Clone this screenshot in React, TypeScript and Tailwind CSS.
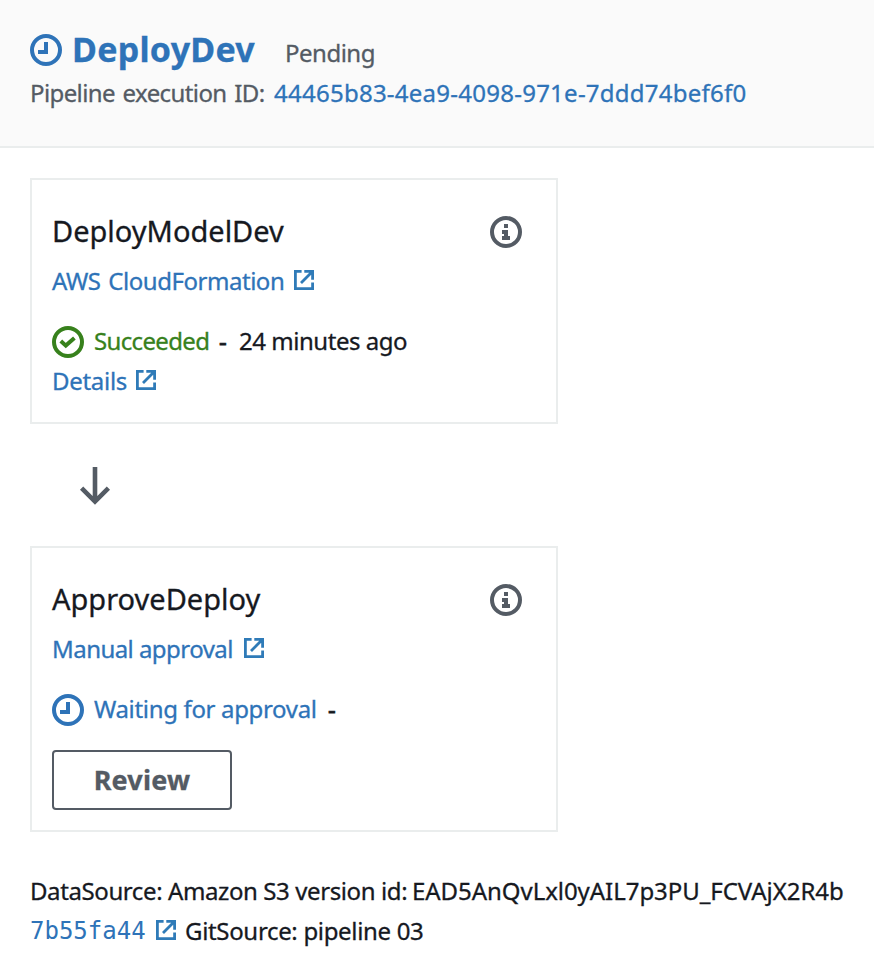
import type { ReactNode } from "react";

function ClockIcon() {
  return (
    <svg className="h-8 w-8 shrink-0" viewBox="0 0 16 16" fill="none" stroke="currentColor" strokeWidth="2">
      <circle cx="8" cy="8" r="7" />
      <path d="M8 4v5H4" />
    </svg>
  );
}

function CheckIcon() {
  return (
    <svg className="h-8 w-8 shrink-0" viewBox="0 0 16 16" fill="none" stroke="currentColor" strokeWidth="2">
      <circle cx="8" cy="8" r="7" />
      <path d="M4.4 7.5 6.9 9.8 11.2 6" />
    </svg>
  );
}

function InfoIcon() {
  return (
    <svg className="h-8 w-8 shrink-0 text-[#545b64]" viewBox="0 0 16 16" fill="currentColor">
      <circle cx="8" cy="8" r="7" fill="none" stroke="currentColor" strokeWidth="2" />
      <path d="M7 4h2v2H7zM6 7h3v3h1v2H6v-2h1V9H6z" />
    </svg>
  );
}

function ExternalIcon() {
  return (
    <svg className="h-5 w-5 shrink-0" viewBox="0 0 20 20" fill="none" stroke="#2f7bb8" strokeWidth="2.8">
      <path d="M7.6 1.4H1.4v17.2h17.2V12.6" />
      <path d="M10.3 1.4h8.3V9.7M18.2 1.8 7 13" />
    </svg>
  );
}

function ArrowDown() {
  return (
    <svg className="h-10 w-8" viewBox="0 0 32 40" fill="none" stroke="#545b64" strokeWidth="4.6">
      <path d="M16 0v35M2.6 21.2 16 34.6l13.4-13.4" />
    </svg>
  );
}

function Card({
  title,
  titleClass,
  className,
  children,
}: {
  title: string;
  titleClass: string;
  className: string;
  children: ReactNode;
}) {
  return (
    <section className={`w-[528px] border-2 border-[#eaeded] bg-white px-5 pt-[31px] ${className}`}>
      <div className="flex h-10 items-start justify-between pr-[14px]">
        <h2 className={`text-[29px] leading-10 ${titleClass}`}>{title}</h2>
        <div className="pt-[5px]">
          <InfoIcon />
        </div>
      </div>
      {children}
    </section>
  );
}

export default function App() {
  return (
    <div className="min-h-[980px] w-[874px] bg-white font-['Noto_Sans','Open_Sans',sans-serif] text-[24px] leading-10 whitespace-nowrap text-[#16191f] [-webkit-text-stroke:0.3px]">
      <header className="h-[148px] border-b-2 border-[#eaeded] bg-[#fafafa] pt-6 pl-[30px]">
        <div className="flex h-[49px] items-start text-[#2e73b8]">
          <div className="w-[42px] pt-[10px]">
            <ClockIcon />
          </div>
          <h1 className="w-[213px] text-[34px] leading-[50px] font-bold tracking-[0.25px] [-webkit-text-stroke:0.3px]">DeployDev</h1>
          <span className="pt-[9px] tracking-[-0.5px] text-[#545b64]">Pending</span>
        </div>
        <div className="flex">
          <span className="w-[244px] tracking-[-0.6px] text-[#545b64] [word-spacing:2px]">Pipeline execution ID:</span>
          <a className="tracking-[0.25px] text-[#2e73b8]">44465b83-4ea9-4098-971e-7ddd74bef6f0</a>
        </div>
      </header>

      <main className="px-[30px] pt-[30px]">
        <Card title="DeployModelDev" titleClass="tracking-[0px]" className="pb-[21px]">
          <div className="mt-[10px] flex text-[#2e73b8]">
            <a className="w-[242px] tracking-[-0.46px] [word-spacing:2px]">AWS CloudFormation</a>
            <div className="pt-[9px]">
              <ExternalIcon />
            </div>
          </div>
          <div className="mt-5 flex">
            <div className="w-[42px] pt-[5px] text-[#37811c]">
              <CheckIcon />
            </div>
            <span className="w-[125px] tracking-[-0.65px] text-[#37811c]">Succeeded</span>
            <span className="w-[20px] [-webkit-text-stroke:0.8px]">-</span>
            <span className="tracking-[-0.47px]">24 minutes ago</span>
          </div>
          <div className="flex text-[#2e73b8]">
            <a className="w-[84px] tracking-[-0.3px]">Details</a>
            <div className="pt-[9px]">
              <ExternalIcon />
            </div>
          </div>
        </Card>

        <div className="h-[122px] pt-[43px] pl-[49px]">
          <ArrowDown />
        </div>

        <Card title="ApproveDeploy" titleClass="" className="pb-5">
          <div className="mt-[10px] flex text-[#2e73b8]">
            <a className="w-[192px] tracking-[-0.55px]">Manual approval</a>
            <div className="pt-[9px]">
              <ExternalIcon />
            </div>
          </div>
          <div className="mt-5 flex">
            <div className="w-[42px] pt-[5px] text-[#2e73b8]">
              <ClockIcon />
            </div>
            <span className="w-[234px] tracking-[-0.34px] text-[#2e73b8]">Waiting for approval</span>
            <span className="[-webkit-text-stroke:0.8px]">-</span>
          </div>
          <button className="mt-[21px] flex h-[60px] w-[180px] items-center justify-center rounded-[4px] border-2 border-[#545b64] text-[27px] leading-10 font-bold tracking-[0.2px] text-[#545b64]">
            Review
          </button>
        </Card>

        <footer className="pt-[39px]">
          <div className="flex">
            <span className="w-[382px] tracking-[-0.4px]">DataSource: Amazon S3 version id:</span>
            <span className="tracking-[-0.05px]">EAD5AnQvLxl0yAIL7p3PU_FCVAjX2R4b</span>
          </div>
          <div className="flex">
            <a className="w-[126px] font-['DejaVu_Sans_Mono',monospace] text-[#2e73b8] [-webkit-text-stroke:0px]">7b55fa44</a>
            <div className="w-[29px] pt-[9px]">
              <ExternalIcon />
            </div>
            <span className="tracking-[-0.33px]">GitSource: pipeline 03</span>
          </div>
        </footer>
      </main>
    </div>
  );
}
